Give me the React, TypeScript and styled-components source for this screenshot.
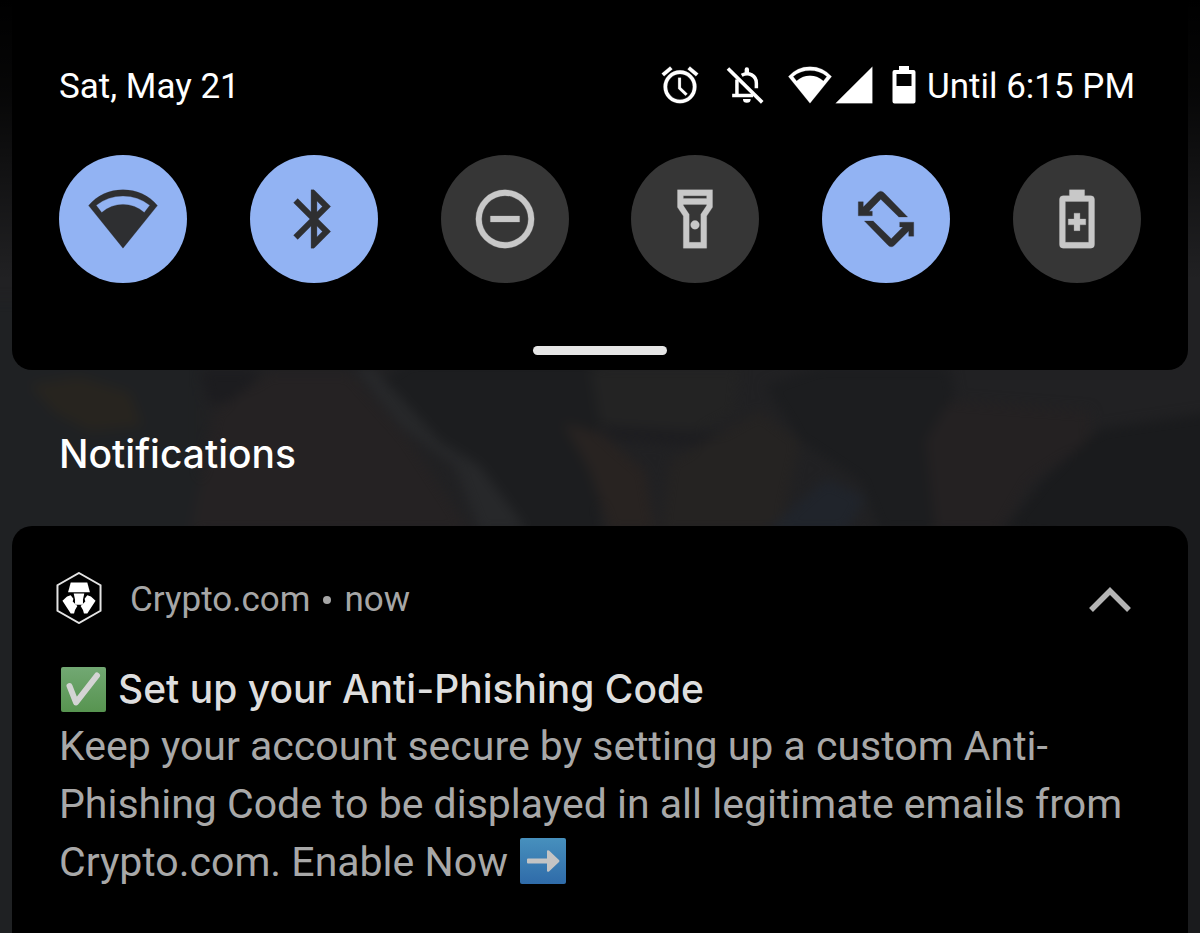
import React, { useState } from "react";
import styled, { createGlobalStyle } from "styled-components";

const GlobalStyle = createGlobalStyle`
  *, *::before, *::after { box-sizing: border-box; }
  body {
    margin: 0;
    background: #000;
    font-family: Roboto, "Liberation Sans", sans-serif;
    color: #fff;
  }
  h1, h2, h3, p { margin: 0; font-weight: 400; }
  button { font: inherit; color: inherit; border: 0; padding: 0; background: none; cursor: pointer; }
  svg { display: block; flex: none; }
`;

const Shade = styled.main`
  position: relative;
  isolation: isolate;
  display: flex;
  flex-direction: column;
  min-height: 100vh;
  padding: 0 12px;
  overflow: hidden;
`;

const Backdrop = styled.svg`
  position: absolute;
  inset: 0;
  z-index: -1;
  width: 100%;
  height: 100%;
`;

const QuickPanel = styled.section`
  display: flex;
  flex-direction: column;
  padding: 63px 47px 8px;
  background: #000;
  border-radius: 0 0 20px 20px;
`;

const StatusRow = styled.header`
  display: flex;
  align-items: center;
  justify-content: space-between;
  padding-right: 6px;
  font-size: 35px;
  line-height: 48px;
`;

const StatusIcons = styled.div`
  display: flex;
  align-items: center;
  gap: 21px;

  svg {
    margin-bottom: 4px;
  }
`;

const IconPair = styled.div`
  display: flex;
`;

const BatteryStatus = styled.div`
  display: flex;
  align-items: center;
  gap: 11px;
  margin-left: -5px;
`;

const Tiles = styled.div`
  display: flex;
  justify-content: space-between;
  margin-top: 44px;
`;

const Tile = styled.button<{ $on: boolean }>`
  display: grid;
  place-items: center;
  width: 128px;
  height: 128px;
  border-radius: 50%;
  background: ${(p) => (p.$on ? "#92b3f3" : "#363636")};
  color: ${(p) => (p.$on ? "#2e2f31" : "#c8c8c8")};
`;

const Handle = styled.button`
  align-self: center;
  display: grid;
  place-items: center;
  width: 134px;
  height: 24px;
  margin-top: 55px;

  &::before {
    content: "";
    width: 100%;
    height: 9px;
    border-radius: 5px;
    background: #e6e6e6;
  }
`;

const SectionTitle = styled.h2`
  padding: 60px 47px 48px;
  font-family: Inter, Roboto, sans-serif;
  font-size: 39px;
  font-weight: 500;
  line-height: 48px;
`;

const Card = styled.article`
  flex: 1;
  padding: 44px 47px;
  background: #000;
  border-radius: 20px 20px 0 0;
`;

const CardHeader = styled.header`
  display: flex;
  align-items: center;
  height: 60px;
  margin-left: -3px;
  font-size: 35px;
  line-height: 48px;
  color: #a6a6a6;
`;

const AppName = styled.span`
  margin-left: 28px;
`;

const Dot = styled.span`
  width: 8px;
  height: 8px;
  margin: 0 13px;
  border-radius: 50%;
  background: #a6a6a6;
`;

const Collapse = styled.button`
  margin-left: auto;
  padding: 8px 10px;
`;

const CardTitle = styled.h3`
  display: flex;
  align-items: center;
  gap: 12px;
  margin-top: 30px;
  padding-left: 1px;
  font-family: Inter, Roboto, sans-serif;
  font-size: 39px;
  font-weight: 500;
  line-height: 57px;
  color: #dedede;
`;

const Message = styled.p`
  font-size: 41px;
  line-height: 58px;
  color: #a8a8a8;

  svg {
    display: inline-block;
    margin-left: 2px;
    vertical-align: -8px;
  }
`;

const WIFI =
  "M12 2A15.5 15.5 0 0 0 .2 7.4L12 22 23.8 7.4A15.5 15.5 0 0 0 12 2Z" +
  "M2.8 7.3A14.8 14.8 0 0 1 21.2 7.3L19.3 9.8A10.9 10.9 0 0 0 4.7 9.8Z";
const BLUETOOTH =
  "M17.71 7.71 12 2h-1v7.59L6.41 5 5 6.41 10.59 12 5 17.59 6.41 19 11 14.41V22h1l5.71-5.71-4.3-4.29 4.3-4.29Z" +
  "M13 5.83l1.88 1.88L13 9.59V5.83ZM14.88 16.29 13 18.17v-3.76l1.88 1.88Z";
const DND = "M12 2a10 10 0 1 0 0 20 10 10 0 0 0 0-20ZM12 4a8 8 0 1 1 0 16 8 8 0 0 1 0-16ZM7 11h10v2H7Z";
const TORCH =
  "M18 2H6v6l2 3v11h8V11l2-3V2ZM16 4v1H8V4h8ZM14 10.4V20h-4v-9.6l-2-3V7h8v.4l-2 3Z" +
  "M12 12.5a1.5 1.5 0 1 0 0 3 1.5 1.5 0 0 0 0-3Z";
const ROTATE =
  "M19.4 11.3 11.3 3Q10.2 1.9 9.1 3L4.2 7.9V6.1H2.5v4.8h4.8V9.3H6.2L10.2 5.2 16.4 11.3Z" +
  "M4.6 12.7 12.7 21Q13.8 22.1 14.9 21L19.8 16.1v1.8h1.7v-4.8h-4.8v1.6h1.1L13.8 18.8 7.6 12.7Z";
const BATTERY_PLUS =
  "M9.4 2h5.2v2h2.1A1.3 1.3 0 0 1 18 5.3v15.4a1.3 1.3 0 0 1-1.3 1.3H7.3A1.3 1.3 0 0 1 6 20.7V5.3A1.3 1.3 0 0 1 7.3 4h2.1Z" +
  "M8 6v14h8V6ZM11 10h2v2h2v2h-2v2h-2v-2H9v-2h2Z";
const ALARM =
  "M22 5.72l-4.6-3.86-1.29 1.53 4.6 3.86L22 5.72ZM7.88 3.39 6.6 1.86 2 5.71l1.29 1.53 4.59-3.85Z" +
  "M12.5 8H11v6l4 3.9 1.1-1.1-3.6-3.5V8ZM12 4a9 9 0 1 0 0 18 9 9 0 0 0 0-18ZM12 20a7 7 0 1 1 0-14 7 7 0 0 1 0 14Z";
const SIGNAL = "M2 22h20V2Z";

const Icon = ({ d, size = 44 }: { d: string; size?: number }) => (
  <svg width={size} height={size} viewBox="0 0 24 24" aria-hidden="true">
    <path d={d} fill="currentColor" fillRule="evenodd" stroke="currentColor" strokeWidth="0.1" />
  </svg>
);

const BellOff = () => (
  <svg width="44" height="44" viewBox="0 0 24 24" fill="none" stroke="currentColor" aria-hidden="true">
    <path d="M7.6 9v8.6M5 17.7h11.4M10.2 6.7C14 4.6 18.2 6.8 18.2 11v2.8" strokeWidth="1.9" />
    <path d="M2.7 3 21.4 21.5" strokeWidth="2" />
    <path d="M11.8 6V3.5a1.2 1.2 0 0 1 2.4 0V6ZM10.9 19.6h4.2a2.1 2.1 0 0 1-4.2 0Z" fill="currentColor" stroke="none" />
  </svg>
);

const Battery = () => (
  <svg width="24" height="38" viewBox="0 0 24 38" aria-hidden="true">
    <path
      d="M7 0h10v4h4.500a2 2 0 0 1 2 2v29.500a2 2 0 0 1-2 2h-19a2 2 0 0 1-2-2V6a2 2 0 0 1 2-2H7ZM4.500 8v12h15V8Z"
      fill="currentColor"
      fillRule="evenodd"
    />
  </svg>
);

const LogoMark = styled.svg`
  margin-bottom: 4px;
`;

const AppLogo = () => (
  <LogoMark width="46" height="52" viewBox="50 36 138 157" aria-hidden="true">
    <path d="M119 39 184 76v77l-65 37-65-37V76Z" fill="none" stroke="#e4e4e4" strokeWidth="6" />
    <g fill="#fff">
      <path d="M94 68h50l8 29H86Z" />
      <path d="M103 101h32l-4 18v13l-3 3h-18l-3-3v-13Z" />
      <path d="M83 110l11-4 8 11-2 8 14 14-7 12-3 10H94L69 123Z" />
      <path d="M155 110l-11-4-8 11 2 8-14 14 7 12 3 10h10l25-38Z" />
    </g>
  </LogoMark>
);

const CheckEmoji = () => (
  <svg width="46" height="46" viewBox="0 0 46 46" role="img" aria-label="Done">
    <defs>
      <linearGradient id="green" x2="0" y2="1">
        <stop stopColor="#72a873" />
        <stop offset="1" stopColor="#579450" />
      </linearGradient>
    </defs>
    <rect x="1" y="1" width="45" height="45" rx="2" fill="url(#green)" />
    <path d="M9.500 20 16 36.500 37 9.500" fill="none" stroke="#d4d4d4" strokeWidth="6" strokeLinecap="round" strokeLinejoin="round" />
  </svg>
);

const ArrowEmoji = () => (
  <svg width="46" height="46" viewBox="0 0 46 46" role="img" aria-label="Next">
    <defs>
      <linearGradient id="blue" x2="0" y2="1">
        <stop stopColor="#4790bd" />
        <stop offset="1" stopColor="#2f6ba9" />
      </linearGradient>
    </defs>
    <rect width="46" height="46" rx="2" fill="url(#blue)" />
    <path d="M8 20.500h19v-7q0-2 2-1l10 9.500q1 1 0 2l-10 9.500q-2 1-2-1v-7H8q-1 0-1-1v-3q0-1 1-1Z" fill="#c4c4c4" />
  </svg>
);

const Chevron = () => (
  <svg width="42" height="26" viewBox="0 0 42 26" aria-hidden="true">
    <path d="M2 23 21 4l19 19" fill="none" stroke="#b4b4b4" strokeWidth="5.500" />
  </svg>
);

const Wallpaper = () => (
  <Backdrop viewBox="0 0 1200 933" preserveAspectRatio="none" aria-hidden="true">
    <defs>
      <filter id="soft" x="-20%" y="-20%" width="140%" height="140%" colorInterpolationFilters="sRGB">
        <feGaussianBlur stdDeviation="6" />
      </filter>
      <linearGradient id="fade" x2="0" y2="1">
        <stop stopColor="#000" />
        <stop offset="0.1" stopColor="#000" stopOpacity="0.8" />
        <stop offset="0.3" stopColor="#000" stopOpacity="0" />
      </linearGradient>
    </defs>
    <rect width="1200" height="933" fill="#212123" />
    <g filter="url(#soft)">
      <path d="M-20 300H200V940H-20Z" fill="#1f2123" />
      <path d="M30 384 80 376 130 392 142 425 90 430 55 412Z" fill="#27241f" />
      <path d="M200 370H262L238 398 210 404Z" fill="#1c1c1f" />
      <path d="M215 410 270 372H350L410 440 470 530H190Z" fill="#252223" />
      <path d="M410 360H600V540H530L470 470 380 380Z" fill="#1c1d1f" />
      <path d="M354 366H372L440 440 480 465 528 530H480L455 465 400 425Z" fill="#27282a" />
      <path d="M563 422 600 432 645 470 655 530H610L590 470Z" fill="#282321" />
      <path d="M590 366H740L735 412 690 436 600 425Z" fill="#232323" />
      <path d="M600 424 730 432 700 446 610 438Z" fill="#1d1d20" />
      <path d="M670 460 760 410 800 440 780 530H660Z" fill="#252322" />
      <path d="M765 385 820 366H950L955 395 925 440 935 530H880L860 480 800 440Z" fill="#1c1d1f" />
      <path d="M766 530 826 478 866 496 846 530Z" fill="#20242b" />
      <path d="M950 400 1090 410 1090 440 1030 480 1000 530H935L925 440Z" fill="#242122" />
      <path d="M1003 530 1044 478 1100 428 1220 410V940H1100V540Z" fill="#1a1b1d" />
    </g>
    <rect width="1200" height="933" fill="url(#fade)" />
  </Backdrop>
);

const QUICK_SETTINGS = [
  { label: "Wi-Fi", icon: WIFI, on: true },
  { label: "Bluetooth", icon: BLUETOOTH, on: true },
  { label: "Do Not Disturb", icon: DND, on: false },
  { label: "Flashlight", icon: TORCH, on: false },
  { label: "Auto-rotate", icon: ROTATE, on: true },
  { label: "Battery Saver", icon: BATTERY_PLUS, on: false },
];

export default function App() {
  const [active, setActive] = useState(QUICK_SETTINGS.map((s) => s.on));
  const toggle = (i: number) => setActive((a) => a.map((v, n) => (n === i ? !v : v)));

  return (
    <>
      <GlobalStyle />
      <Shade>
        <Wallpaper />
        <QuickPanel aria-label="Quick settings">
          <StatusRow>
            <span>Sat, May 21</span>
            <StatusIcons>
              <Icon d={ALARM} />
              <BellOff />
              <IconPair>
                <Icon d={WIFI} />
                <Icon d={SIGNAL} />
              </IconPair>
              <BatteryStatus>
                <Battery />
                <span>Until 6:15 PM</span>
              </BatteryStatus>
            </StatusIcons>
          </StatusRow>
          <Tiles>
            {QUICK_SETTINGS.map((s, i) => (
              <Tile key={s.label} type="button" $on={active[i]} aria-label={s.label} aria-pressed={active[i]} onClick={() => toggle(i)}>
                <Icon d={s.icon} size={70} />
              </Tile>
            ))}
          </Tiles>
          <Handle type="button" aria-label="Expand quick settings" />
        </QuickPanel>
        <SectionTitle>Notifications</SectionTitle>
        <Card>
          <CardHeader>
            <AppLogo />
            <AppName>Crypto.com</AppName>
            <Dot />
            <span>now</span>
            <Collapse type="button" aria-label="Collapse notification">
              <Chevron />
            </Collapse>
          </CardHeader>
          <CardTitle>
            <CheckEmoji />
            Set up your Anti-Phishing Code
          </CardTitle>
          <Message>
            Keep your account secure by setting up a custom Anti-Phishing Code to be displayed in all legitimate emails
            from Crypto.com. Enable Now <ArrowEmoji />
          </Message>
        </Card>
      </Shade>
    </>
  );
}
